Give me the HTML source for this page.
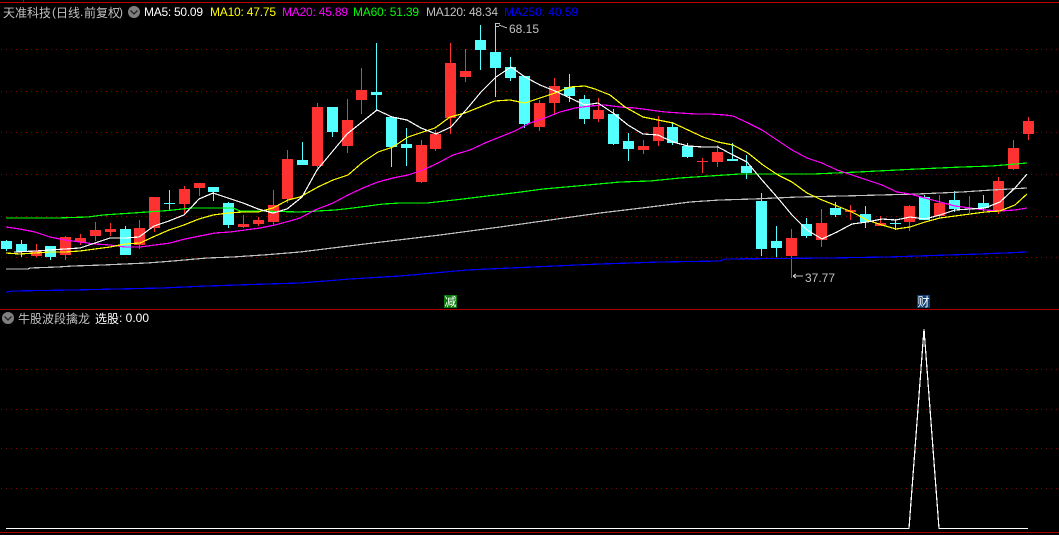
<!DOCTYPE html>
<html><head><meta charset="utf-8"><style>
html,body{margin:0;padding:0;background:#000;width:1059px;height:535px;overflow:hidden}
svg{display:block;position:absolute;left:0;top:0}
text{font-family:"Liberation Sans","WenQuanYi Zen Hei","Noto Sans CJK SC",sans-serif;font-size:12px}
.c{font-family:"WenQuanYi Zen Hei","Noto Sans CJK SC",sans-serif}
</style></head><body>
<svg width="1059" height="535" viewBox="0 0 1059 535" xmlns="http://www.w3.org/2000/svg">
<rect width="1059" height="535" fill="#000"/>
<g shape-rendering="crispEdges">
<path d="M0 2.5H1059M23.5 0V2" stroke="#c00000" fill="none"/>
<path d="M0 309.5H1059M0 532.5H1059" stroke="#a80000" fill="none"/>
<path d="M1 49.5H1059M1 91.5H1059M1 132.5H1059M1 174.5H1059M1 216.5H1059M1 257.5H1059M1 369.5H1059M1 409.5H1059M1 448.5H1059M1 488.5H1059" stroke="#8a0000" stroke-dasharray="1 4" fill="none"/>
<!-- cyan wicks -->
<path stroke="#54ffff" fill="none" d="M6.5 240V251M21.5 240V257M50.5 246V260M125.5 226V255M169.5 190V210M213.5 187V201M228.5 202V228M302.5 142V165M332.5 107V137M376.5 43V110M391.5 117V167M406.5 128V166M480.5 25V70M495.5 23V97M510.5 57V81M524.5 76V128M569.5 74V102M584.5 95V124M613.5 109V145M628.5 133V161M672.5 122V145M687.5 143V158M732.5 143V161M746.5 155V179M761.5 193V256M776.5 226V257M806.5 218V238M835.5 202V217M865.5 206V228M895.5 219V230M924.5 195V220M954.5 191V212M983.5 195V211"/>
<!-- cyan bodies -->
<path fill="#54ffff" d="M1 241h11v8h-11zM16 244h11v8h-11zM45 246h11v11h-11zM120 229h11v26h-11zM164 203h11v1h-11zM208 187h11v5h-11zM223 203h11v22h-11zM297 160h11v5h-11zM327 107h11v25h-11zM371 92h11v3h-11zM386 117h11v30h-11zM401 144h11v4h-11zM475 40h11v10h-11zM490 52h11v16h-11zM505 67h11v11h-11zM519 76h11v48h-11zM564 87h11v9h-11zM579 99h11v20h-11zM608 114h11v30h-11zM623 141h11v8h-11zM667 127h11v16h-11zM682 146h11v11h-11zM727 159h11v2h-11zM741 166h11v7h-11zM756 201h11v48h-11zM771 241h11v7h-11zM801 224h11v12h-11zM830 208h11v7h-11zM860 214h11v8h-11zM890 223h11v1h-11zM919 197h11v23h-11zM949 200h11v9h-11zM978 203h11v5h-11z"/>
<!-- red wicks -->
<path stroke="#ff3232" fill="none" d="M36.5 244V257M65.5 236V260M80.5 234V245M95.5 222V241M110.5 223V236M139.5 220V249M154.5 197V232M184.5 186V214M199.5 183V196M243.5 215V228M258.5 217V226M273.5 190V225M287.5 150V203M317.5 103V168M347.5 99V153M361.5 68V114M421.5 140V183M435.5 130V151M450.5 43V134M465.5 49V82M539.5 100V131M554.5 78V115M598.5 98V122M643.5 140V154M658.5 116V146M702.5 158V173M717.5 145V167M791.5 229V278M821.5 209V247M850.5 205V220M880.5 216V226M909.5 205V231M939.5 195V218M969.5 196V213M998.5 177V214M1013.5 140V170M1028.5 117V140"/>
<!-- red bodies -->
<path fill="#ff3232" d="M31 251h11v5h-11zM60 237h11v18h-11zM75 238h11v4h-11zM90 230h11v6h-11zM105 229h11v3h-11zM134 228h11v17h-11zM149 197h11v31h-11zM179 189h11v15h-11zM194 183h11v5h-11zM238 224h11v3h-11zM253 220h11v4h-11zM268 205h11v17h-11zM282 159h11v40h-11zM312 107h11v59h-11zM342 120h11v26h-11zM356 90h11v10h-11zM416 145h11v37h-11zM430 134h11v15h-11zM445 63h11v55h-11zM460 71h11v6h-11zM534 103h11v24h-11zM549 86h11v17h-11zM593 110h11v9h-11zM638 146h11v4h-11zM653 127h11v14h-11zM697 161h11v1h-11zM712 152h11v10h-11zM786 238h11v18h-11zM816 223h11v17h-11zM845 210h11v2h-11zM875 223h11v3h-11zM904 206h11v16h-11zM934 203h11v13h-11zM993 181h11v30h-11zM1008 148h11v21h-11zM1023 121h11v13h-11z"/>
<!-- MA lines -->
<g fill="none" stroke-width="1.2">
<polyline stroke="#0000ff" points="6,292 13,291 73,290 117,289 162,288 207,286 267,284 300,283 350,279 400,276 467,270 533,267 600,264 660,262 720,261 725,259 828,258 887,257 980,254 1027,252"/>
<polyline stroke="#c0c0c0" points="6,269 28,269 30,268 58,267 73,266 103,265 147,263 173,261 207,258 233,257 263,255 300,252 373,243 440,235 500,227 550,220 600,213 650,207 690,202 720,200 753,199 798,197 843,196 917,194 962,192 992,190 1027,188"/>
<polyline stroke="#00ff00" points="6,218 57,218 88,217 103,215 118,214 133,213 147,212 162,211 173,210 182,209 193,208 233,208 240,211 260,211 300,212 335,210 353,208 383,204 400,203 427,203 463,199 487,196 513,193 543,189 577,186 620,182 650,181 680,178 710,176 740,174 813,174 858,172 917,169 962,167 992,166 1027,163"/>
<polyline stroke="#ff00ff" points="6,227 20,229 35,232 50,237 65,240 80,242 95,244 110,245 125,247 140,247 155,245 170,243 185,239 200,236 215,233 230,232 245,230 260,228 275,225 290,221 300,218 315,210 333,203 348,195 363,188 378,182 393,178 408,175 423,170 438,163 453,155 470,150 485,143 500,137 515,131 530,123 545,118 560,112 575,108 590,106 605,105 620,107 635,108 650,110 665,112 680,113 695,114 710,114 725,115 733,116 748,123 762,130 777,140 792,150 807,158 822,163 837,170 852,175 867,180 882,185 897,192 910,194 925,198 940,202 955,206 970,208 985,210 1000,211 1015,210 1027,208"/>
<polyline stroke="#ffff00" points="6,253 20,254 35,253 50,252 65,252 80,251 95,249 110,247 125,244 140,243 153,237 169,230 184,225 199,219 213,215 228,213 243,212 258,212 273,208 288,200 300,197 318,187 333,180 348,175 363,162 378,152 393,147 408,137 435,128 450,117 465,113 480,107 495,101 510,100 525,103 540,98 555,93 570,87 585,86 595,89 610,95 625,107 643,117 658,120 673,123 688,130 703,137 718,142 733,145 748,153 763,165 778,175 792,182 807,193 822,200 837,206 852,212 867,220 882,225 896,229 910,227 925,222 940,218 955,216 970,214 985,212 1000,211 1015,205 1027,194"/>
<polyline stroke="#ffffff" points="14,252 36,251 50,250 65,249 80,248 95,243 110,238 125,238 139,237 154,226 169,221 184,215 199,199 213,193 228,198 243,203 258,209 273,213 287,209 302,197 317,170 332,152 347,134 362,122 377,110 392,117 407,120 421,128 436,134 451,127 466,110 481,92 496,77 511,67 525,77 540,85 555,91 570,98 585,105 598,103 613,113 628,125 643,134 658,135 673,142 688,146 703,147 718,147 733,155 747,162 762,180 777,197 792,215 807,230 822,239 837,232 852,224 867,222 882,219 896,220 910,217 925,219 940,215 955,210 970,209 985,208 1000,202 1015,188 1027,174"/>
<polyline stroke="#ffffff" points="6,528.5 909,528.5 924,329 939,528.5 1028,528.5"/>
</g>
<!-- annotation arrows -->
<path stroke="#c0c0c0" fill="none" d="M499 25L507 28M496 23.500H500M496 26.500H499"/>
<path stroke="#c0c0c0" fill="none" d="M793 276H803M793 276L796 274M793 276L796 278"/>
<rect x="444" y="295" width="13" height="13" fill="#0a7a0a"/>
<rect x="917" y="295" width="13" height="13" fill="#0f3f6f"/>
</g>
<!-- circle icons -->
<circle cx="134" cy="12" r="6" fill="#808080"/>
<path d="M130.5 10.5L134 14L137.500 10.500" stroke="#222" stroke-width="1.300" fill="none"/>
<circle cx="8" cy="318" r="6" fill="#808080"/>
<path d="M4.500 316.500L8 320L11.500 316.500" stroke="#222" stroke-width="1.300" fill="none"/>
<!-- text -->
<text class="c" x="3" y="17" fill="#c0c0c0">天准科技</text>
<text x="52" y="16" fill="#c0c0c0">(</text>
<text class="c" x="56" y="17" fill="#c0c0c0">日线</text>
<text x="80" y="16" fill="#c0c0c0">.</text>
<text class="c" x="84" y="17" fill="#c0c0c0">前复权</text>
<text x="119" y="16" fill="#c0c0c0">)</text>
<text x="144" y="16" fill="#ffffff" textLength="59">MA5: 50.09</text>
<text x="210" y="16" fill="#ffff00" textLength="66">MA10: 47.75</text>
<text x="282" y="16" fill="#ff00ff" textLength="66">MA20: 45.89</text>
<text x="353" y="16" fill="#00ff00" textLength="66">MA60: 51.39</text>
<text x="426" y="16" fill="#c0c0c0" textLength="72">MA120: 48.34</text>
<text x="504" y="16" fill="#0000ff" textLength="74">MA250: 40.59</text>
<text x="509" y="33" fill="#c0c0c0">68.15</text>
<text x="805" y="282" fill="#c0c0c0">37.77</text>
<text class="c" x="444.500" y="306" fill="#ffffff">减</text>
<text class="c" x="917.500" y="306" fill="#ffffff">财</text>
<text class="c" x="18" y="323" fill="#c0c0c0">牛股波段擒龙</text>
<text class="c" x="95" y="323" fill="#ffffff">选股</text>
<text x="119" y="322" fill="#ffffff">: 0.00</text>
</svg>
</body></html>
